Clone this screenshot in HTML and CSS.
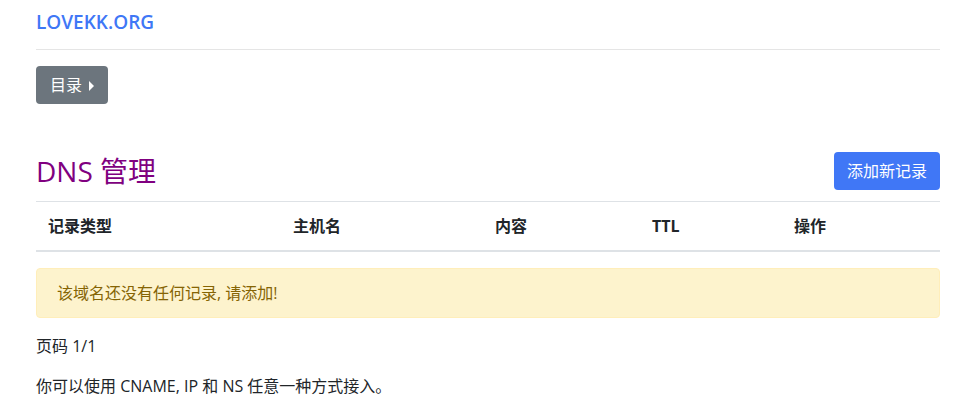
FILE: index.html
```html
<!DOCTYPE html>
<html lang="zh-CN">
<head>
    <meta charset="UTF-8">
    <meta name="viewport" content="width=device-width, initial-scale=1.0">
    <title>DNS 管理 - LOVEKK.ORG</title>
<link rel="stylesheet" href="styles.css">
</head>
<body>
    <div class="container">
        <div class="topbar">
            <a class="brand" href="#">LOVEKK.ORG</a>
        </div>
        <div class="menu">
            <button class="btn btn-gray">目录 <span class="caret"></span></button>
        </div>

        <div class="title-row">
            <h2>DNS 管理</h2>
            <button class="btn btn-blue">添加新记录</button>
        </div>

        <table class="records">
            <thead>
                <tr>
                    <th class="c-type">记录类型</th>
                    <th class="c-host">主机名</th>
                    <th class="c-value">内容</th>
                    <th class="c-ttl">TTL</th>
                    <th class="c-op">操作</th>
                </tr>
            </thead>
            <tbody></tbody>
        </table>

        <div class="alert">该域名还没有任何记录, 请添加!</div>

        <p>页码 1/1</p>
        <p>你可以使用 CNAME, IP 和 NS 任意一种方式接入。</p>
    </div>
</body>
</html>
```

FILE: styles.css
```css
*{
    margin: 0;
    padding: 0;
    box-sizing: border-box;
}
body{
    font-family: "Open Sans", "Noto Sans CJK SC", sans-serif;
    font-size: 16px;
    line-height: 1.5;
    color: #212529;
    background: #fff;
}
.container{
    width: 904px;
    margin-left: 36px;
}
.topbar{
    padding: 8px 0 13px;
    border-bottom: 1px solid #e5e5e5;
}
.brand{
    font-size: 19px;
    font-weight: 600;
    line-height: 28px;
    color: #3f77f6;
    text-decoration: none;
}
.menu{
    margin-top: 16px;
}
.btn{
    font-family: inherit;
    font-size: 16px;
    line-height: 24px;
    padding: 7px 13px;
    border: none;
    border-radius: 4px;
    color: #fff;
    cursor: pointer;
}
.btn-gray{
    background: #6c757d;
    padding-left: 14px;
    padding-right: 14px;
}
.btn-blue{
    background: #4077f6;
}
.caret{
    display: inline-block;
    width: 0;
    height: 0;
    margin-left: 3px;
    border-top: 5px solid transparent;
    border-bottom: 5px solid transparent;
    border-left: 5px solid #fff;
    vertical-align: 0;
}
.title-row{
    display: flex;
    justify-content: space-between;
    align-items: center;
    margin-top: 48px;
    margin-bottom: 11px;
}
h2{
    font-size: 28px;
    font-weight: 400;
    line-height: 38px;
    color: #800080;
}
.records{
    width: 100%;
    border-collapse: collapse;
}
.records th{
    text-align: left;
    font-weight: bold;
    padding: 12px;
    border-top: 1px solid #dee2e6;
    border-bottom: 2px solid #dee2e6;
}
.c-type{ width: 245px; }
.c-host{ width: 202px; }
.c-value{ width: 157px; }
.c-ttl{ width: 142px; }
.alert{
    margin: 16px 0;
    padding: 12px 20px;
    background: #fdf3cd;
    border: 1px solid #ffeeba;
    border-radius: 4px;
    color: #856404;
}
p{
    margin-bottom: 16px;
}
```
